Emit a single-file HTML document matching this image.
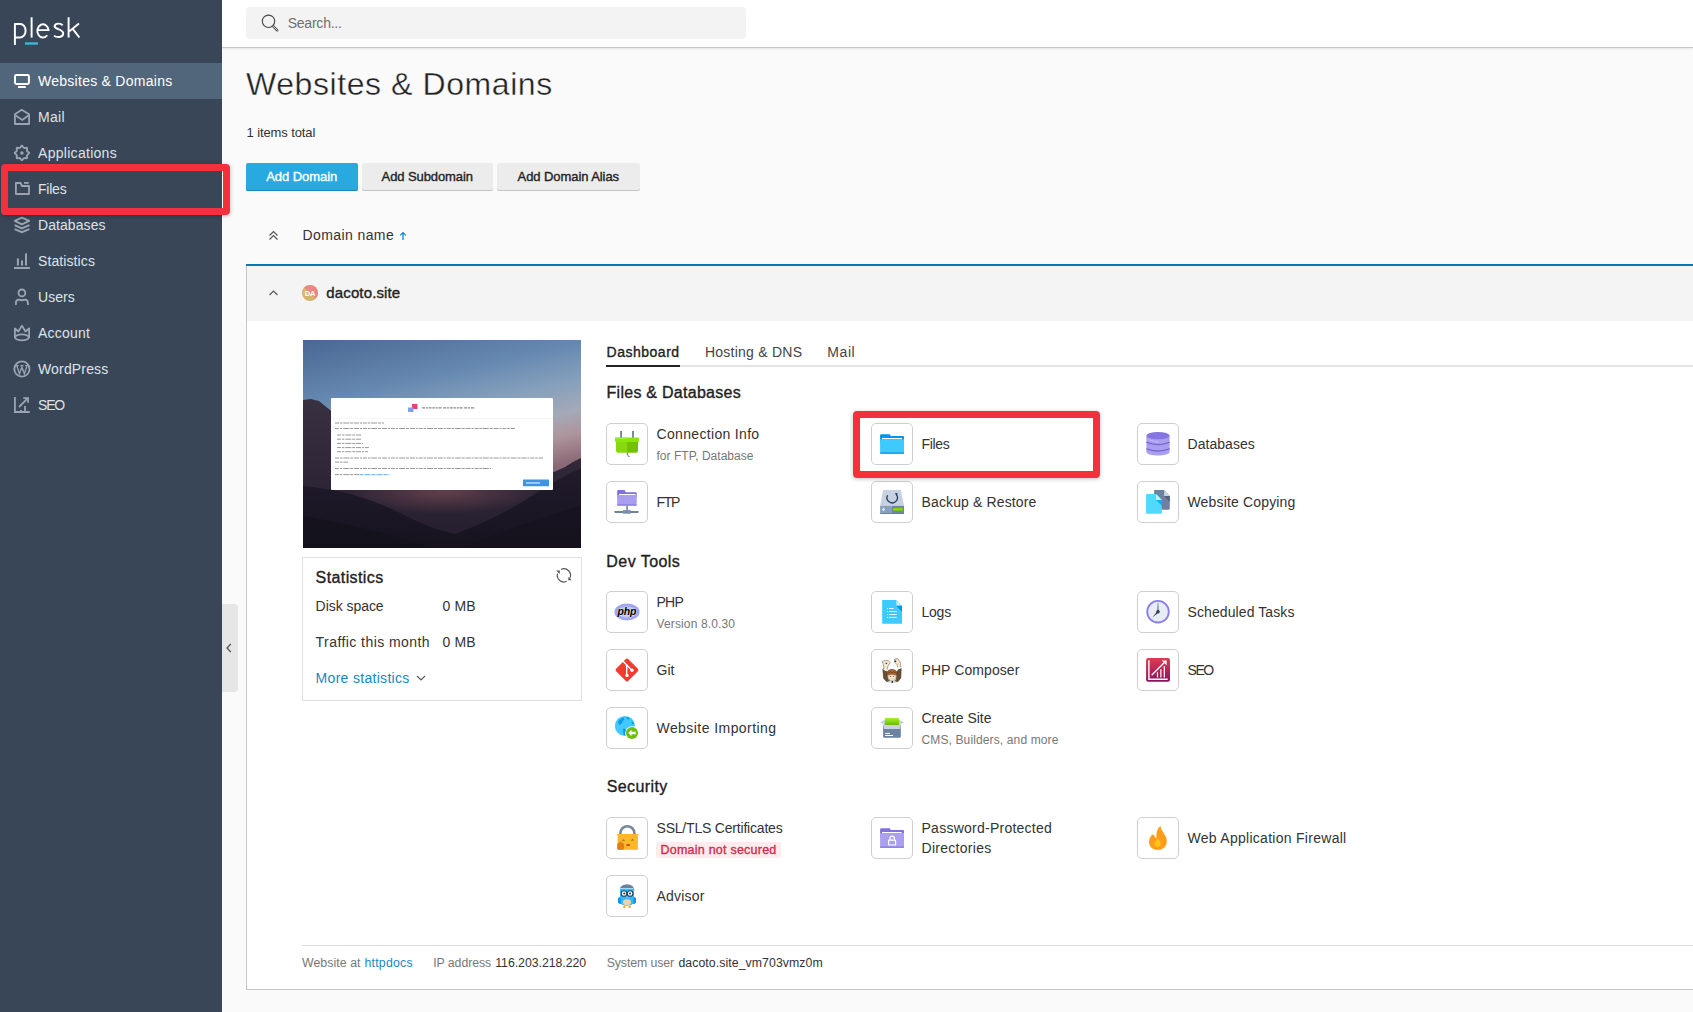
<!DOCTYPE html>
<html><head><meta charset="utf-8"><title>Websites &amp; Domains</title>
<style>
*{box-sizing:border-box}
html,body{margin:0;padding:0}
body{width:1693px;height:1012px;overflow:hidden;position:relative;background:#fafafa;font-family:"Liberation Sans",sans-serif;}
.a{position:absolute}
.t{position:absolute;white-space:nowrap;font-family:"Liberation Sans",sans-serif}
.ib{position:absolute;width:42px;height:42px;border:1px solid #cfcfcf;border-radius:5px;background:#fff}
.ib svg{position:absolute;left:0;top:0}
.rb{position:absolute;border:7px solid #f4303f;border-radius:4px;box-shadow:0 1px 4px rgba(0,0,0,.25)}
</style></head><body>
<div class="a" style="left:0;top:0;width:222px;height:1012px;background:#384657"></div>
<div class="a" style="left:0;top:63px;width:222px;height:36px;background:#51667b"></div>
<svg class="a" style="left:0;top:0" width="100" height="60" viewBox="0 0 100 60">
<g fill="none" stroke="#fff" stroke-width="1.95">
<path d="M14.9 23.2 V44.9"/><path d="M14.9 24 H20.3 A5.3 6.7 0 0 1 20.3 37.4 H14.9"/>
<path d="M31.6 17.3 V37.6"/>
<path d="M37.5 30.1 H48.5 A5.6 6.6 0 1 0 47.2 35.2"/>
<path d="M62.6 25.3 C61.2 23.4 55.4 22.6 54.6 25.9 C53.8 29.6 63.6 28.6 63.2 33.6 C62.8 38 56.2 37.6 54 35.6"/>
<path d="M68.6 17.3 V37.6 M79 23.6 L69.4 31.2 M72.7 28.8 L79.4 37.5"/>
</g>
<rect x="25" y="42.3" width="12.9" height="2.4" fill="#3fb6dc"/>
</svg>
<div class="a" style="left:222px;top:604px;width:16px;height:88px;background:#e6e6e6;border-radius:0 4px 4px 0"></div>
<svg class="a" style="left:222px;top:604px" width="16" height="88"><path d="M8.8 40 L5 44 L8.8 48" fill="none" stroke="#555" stroke-width="1.3"/></svg>
<div class="a" style="left:222px;top:0;width:1471px;height:47px;background:#fff"></div>
<div class="a" style="left:222px;top:47px;width:1471px;height:1px;background:#c9c9c9;box-shadow:0 1px 2px rgba(0,0,0,.12)"></div>
<div class="a" style="left:246px;top:7px;width:500px;height:32px;background:#f3f3f3;border-radius:4px"></div>
<svg class="a" style="left:256px;top:10px" width="30" height="26"><circle cx="12.5" cy="11.3" r="6.2" fill="none" stroke="#4a4a4a" stroke-width="1.15"/><path d="M17 16 L21.2 20.3" stroke="#444" stroke-width="2.4" stroke-linecap="round"/><path d="M17 16 L21.2 20.3" stroke="#f3f3f3" stroke-width="0.9" stroke-linecap="round"/></svg>
<div class="a" style="left:246px;top:163px;width:112px;height:28px;background:#28a9e0;border-radius:2px;box-shadow:inset 0 -1px 0 #1788bd"></div>
<div class="a" style="left:362px;top:163px;width:131px;height:28px;background:#ececec;border-radius:2px;box-shadow:inset 0 -1px 0 #c4c4c4"></div>
<div class="a" style="left:497px;top:163px;width:143px;height:28px;background:#ececec;border-radius:2px;box-shadow:inset 0 -1px 0 #c4c4c4"></div>
<svg class="a" style="left:264px;top:226px" width="20" height="20"><path d="M5.5 9.5 L9.5 5.5 L13.5 9.5 M5.5 13.5 L9.5 9.5 L13.5 13.5" fill="none" stroke="#555" stroke-width="1.2"/></svg>
<svg class="a" style="left:396px;top:228px" width="14" height="14"><path d="M7 4.6 V12 M4.2 7.4 L7 4.6 L9.8 7.4" fill="none" stroke="#1a87c2" stroke-width="1.3"/></svg>
<div class="a" style="left:246px;top:264px;width:1447px;height:726px;background:#fff;border-left:1px solid #c6c6c6;border-bottom:1px solid #c6c6c6"></div>
<div class="a" style="left:246px;top:264px;width:1447px;height:2px;background:#0778b4"></div>
<div class="a" style="left:247px;top:266px;width:1446px;height:55px;background:#f4f4f4"></div>
<svg class="a" style="left:264px;top:283px" width="20" height="20"><path d="M5.5 12 L9.5 8 L13.5 12" fill="none" stroke="#555" stroke-width="1.2"/></svg>
<svg class="a" style="left:302px;top:285px" width="16" height="16" viewBox="0 0 16 16">
<defs><clipPath id="cav"><circle cx="8" cy="8" r="8"/></clipPath></defs>
<g clip-path="url(#cav)"><rect width="16" height="16" fill="#d6b46d"/><path d="M0 0 H16 V16 Z" fill="#e98886"/></g>
<text x="8" y="10.6" font-family="Liberation Sans" font-size="7.4" font-weight="700" fill="#fff" text-anchor="middle">DA</text></svg>
<svg class="a" style="left:303px;top:340px" width="278" height="208" viewBox="0 0 278 208">
<defs>
<linearGradient id="sky" x1="0" y1="0" x2="0.3" y2="1">
<stop offset="0" stop-color="#4a6793"/><stop offset="0.28" stop-color="#6588b0"/><stop offset="0.45" stop-color="#86a0bc"/><stop offset="0.58" stop-color="#a4a9b8"/><stop offset="0.68" stop-color="#ae959c"/><stop offset="0.8" stop-color="#8d6a78"/><stop offset="1" stop-color="#5a4055"/></linearGradient>
<radialGradient id="glow" cx="0.5" cy="0.5" r="0.5"><stop offset="0" stop-color="#7a4a56" stop-opacity="0.7"/><stop offset="1" stop-color="#7a4a56" stop-opacity="0"/></radialGradient>
<linearGradient id="far" x1="0" y1="0" x2="0" y2="1"><stop offset="0" stop-color="#393042"/><stop offset="1" stop-color="#251e2e"/></linearGradient>
<linearGradient id="near" x1="0" y1="0" x2="0" y2="1"><stop offset="0" stop-color="#211b2b"/><stop offset="1" stop-color="#16131f"/></linearGradient>
</defs>
<rect width="278" height="208" fill="url(#sky)"/>
<path d="M0 60 L8 59 L16 61 L27 70 L60 92 L100 116 L140 140 L175 132 L215 118 L240 128 L251 132 L262 127 L270 122 L278 118 V208 H0 Z" fill="url(#far)"/>
<ellipse cx="140" cy="152" rx="95" ry="22" fill="url(#glow)"/>
<path d="M0 146 Q50 150 95 172 Q130 190 152 194 Q195 178 232 154 Q258 137 278 128 V208 H0 Z" fill="url(#near)"/>
<path d="M0 176 Q60 186 130 208 H0Z" fill="#13101b" opacity="0.55"/>
<path d="M278 166 Q220 182 160 208 H278Z" fill="#13101b" opacity="0.5"/>
<rect x="28" y="58" width="222" height="92" rx="1" fill="#fff"/>
<rect x="28" y="78" width="222" height="0.6" fill="#eee"/>
<rect x="109" y="64" width="5.5" height="5" fill="#e8436a"/><rect x="105" y="67.5" width="5.5" height="4.5" fill="#7da0ec"/>
<line x1="119" y1="67.8" x2="172" y2="67.8" stroke="#666" stroke-width="1.3" stroke-dasharray="3 0.8 2 0.8 3 0.8 2.5 0.8 2 0.8 3 1.6" opacity="0.75"/>
<g stroke="#6e6e6e" stroke-width="1.0" stroke-dasharray="4 0.9 2.5 0.9 6 0.9 3 0.9 5 0.9 2 0.9" opacity="0.7"><line x1="32" y1="83" x2="81" y2="83"/><line x1="32" y1="88.5" x2="212" y2="88.5"/><line x1="34" y1="95" x2="59" y2="95"/><line x1="34" y1="99.2" x2="58" y2="99.2"/><line x1="34" y1="103.4" x2="60" y2="103.4"/><line x1="34" y1="107.6" x2="66" y2="107.6"/><line x1="34" y1="111.7" x2="65" y2="111.7"/><line x1="32" y1="118" x2="240" y2="118"/><line x1="32" y1="122.1" x2="45" y2="122.1"/><line x1="32" y1="128.5" x2="188" y2="128.5"/><line x1="32" y1="134.6" x2="56" y2="134.6"/></g>
<line x1="56.5" y1="134.6" x2="86.5" y2="134.6" stroke="#6aa8e6" stroke-width="1.25" stroke-dasharray="4 1 6 1" opacity="0.8"/>
<rect x="220" y="139.5" width="26" height="6.8" rx="0.5" fill="#3f94e2"/>
<rect x="223" y="142.3" width="14" height="1.3" fill="#cfe3f7"/>
</svg>
<div class="a" style="left:302px;top:557px;width:280px;height:144px;border:1px solid #e1e1e1;background:#fff"></div>
<svg class="a" style="left:554px;top:565.5px" width="20" height="20"><g fill="none" stroke="#555" stroke-width="1.15"><path d="M7.11 3.42 A6.6 6.6 0 0 1 15.88 12.19"/><path d="M12.79 15.33 A6.6 6.6 0 0 1 3.52 7.69"/></g><path d="M14.3 10.9 L14.3 14.3 L17.7 14.3Z M2.2 4.6 L5.8 4.6 L5.8 8.1Z" fill="#555"/></svg>
<svg class="a" style="left:414px;top:672px" width="14" height="12"><path d="M3 4 L7 8 L11 4" fill="none" stroke="#555" stroke-width="1.1"/></svg>
<div class="a" style="left:606px;top:365px;width:1087px;height:2px;background:#e3e3e3"></div>
<div class="a" style="left:606px;top:365px;width:74px;height:2px;background:#222"></div>
<div class="a" style="left:302px;top:945px;width:1391px;height:1px;background:#dcdcdc"></div>
<div class="a" style="left:656px;top:842px;width:125px;height:16px;background:#fdebee;border-radius:2px"></div>
<div class="ib" style="left:606px;top:423px"><svg style="left:-1px;top:-1px" width="42" height="42" viewBox="0 0 42 42"><path d="M14.2 8 h1.8 v7 h-1.8z M26.1 8 h1.8 v7 h-1.8z" fill="#6b7f98"/>
<rect x="9" y="14.5" width="24" height="4.4" rx="0.8" fill="#8be60c"/>
<rect x="9" y="14.5" width="12" height="1.4" fill="#9cf236" opacity="0.8"/>
<path d="M10 18.9 H21 V29.8 H12 Q10 29.8 10 27.8Z" fill="#86d80f"/>
<path d="M21 18.9 H32 V27.8 Q32 29.8 30 29.8 H21Z" fill="#72c200"/>
<path d="M21.3 29.8 V31.5 Q21.6 33.4 23.6 33.6" fill="none" stroke="#6b7f98" stroke-width="1.1"/></svg></div>
<div class="ib" style="left:871px;top:423px"><svg style="left:-1px;top:-1px" width="42" height="42" viewBox="0 0 42 42"><path d="M9.1 12.2 Q9.1 11.2 10.1 11.2 H18.6 L19.8 13 H32 Q33 13 33 14 V20 H9.1Z" fill="#0095ea"/>
<rect x="11" y="15" width="20" height="1.3" fill="#fff"/>
<path d="M9.1 16.3 H33 V29.8 Q33 30.7 32 30.7 H10.1 Q9.1 30.7 9.1 29.8Z" fill="#3ec9ff"/>
<rect x="9.1" y="29.4" width="23.9" height="1.3" fill="#0a96ea"/></svg></div>
<div class="ib" style="left:1137px;top:423px"><svg style="left:-1px;top:-1px" width="42" height="42" viewBox="0 0 42 42"><ellipse cx="21" cy="29" rx="11.6" ry="3.6" fill="#a89def"/>
<rect x="9.4" y="12.6" width="23.2" height="16.4" fill="#a89def"/>
<ellipse cx="21" cy="12.6" rx="11.6" ry="3.6" fill="#8476e0"/>
<path d="M9.4 19.3 Q21 24.2 32.6 19.3" fill="none" stroke="#6e60c8" stroke-width="1.1"/>
<path d="M9.4 25.7 Q21 30.6 32.6 25.7" fill="none" stroke="#6e60c8" stroke-width="1.1"/>
<path d="M11 16.5 Q16 18.5 22 18.8" fill="none" stroke="#c3baf7" stroke-width="0.9"/></svg></div>
<div class="ib" style="left:606px;top:481px"><svg style="left:-1px;top:-1px" width="42" height="42" viewBox="0 0 42 42"><path d="M11.2 10.1 Q11.2 9.1 12.2 9.1 H18.6 L19.8 11.2 H29.8 Q30.7 11.2 30.7 12.2 V17 H11.2Z" fill="#8070e0"/>
<rect x="13" y="13" width="16.4" height="1.1" fill="#fff"/>
<path d="M11.2 14.1 H30.7 V23.6 Q30.7 24.6 29.7 24.6 H12.2 Q11.2 24.6 11.2 23.6Z" fill="#aa9ef0"/>
<rect x="11.2" y="23.5" width="19.5" height="1.1" fill="#8070e0"/>
<rect x="20.3" y="24.6" width="1.6" height="5.4" fill="#6e8399"/>
<path d="M8.2 30 H32.8 L32.2 31.9 H8.8Z" fill="#6e8399"/>
<rect x="17" y="29.1" width="7.8" height="3.6" fill="#7b8fa5"/></svg></div>
<div class="ib" style="left:871px;top:481px"><svg style="left:-1px;top:-1px" width="42" height="42" viewBox="0 0 42 42"><path d="M12.1 9.1 H29.8 L33 24.8 H9.1Z" fill="#c6d1e1"/>
<rect x="9.1" y="24.8" width="11.9" height="8" fill="#8aa0b8"/>
<rect x="21" y="24.8" width="12" height="8" fill="#6f86a3"/>
<rect x="9.1" y="32" width="23.9" height="0.8" fill="#60789a"/>
<path d="M12.5 26.6 L14 28.5 L12.5 30.4 L11 28.5Z" fill="#c8f0ff"/>
<rect x="22" y="27" width="9.8" height="2.8" rx="1" fill="#7ed800"/>
<path d="M16.6 14.2 A5.2 5.2 0 1 0 25.4 13.6" fill="none" stroke="#243c5c" stroke-width="1.3"/>
<path d="M23.8 12.2 L26.8 12 L25.6 15Z" fill="#243c5c"/></svg></div>
<div class="ib" style="left:1137px;top:481px"><svg style="left:-1px;top:-1px" width="42" height="42" viewBox="0 0 42 42"><path d="M17.1 9.1 H27.1 L32.8 15 V27.7 Q32.8 28.7 31.8 28.7 H17.1Z" fill="#6f829d"/>
<path d="M27.1 9.1 L32.8 15 H27.1Z" fill="#c8d3e3"/>
<path d="M27.1 15 H32.8 V21Z" fill="#4f6583"/>
<path d="M9.1 13 H19.1 L24.8 18.9 V32.8 H9.1Z" fill="#50d8ff"/>
<path d="M19.1 13 L24.8 18.9 H19.1Z" fill="#c8f0ff"/>
<path d="M19.1 18.9 H24.8 V24.8Z" fill="#00b4f0"/></svg></div>
<div class="ib" style="left:606px;top:591px"><svg style="left:-1px;top:-1px" width="42" height="42" viewBox="0 0 42 42"><ellipse cx="21" cy="21" rx="12.6" ry="8.4" fill="#a0a6f0"/>
<ellipse cx="21" cy="21" rx="9.5" ry="5.6" fill="#fff" opacity="0.35"/>
<text x="20.8" y="23.6" font-family="Liberation Sans" font-size="10.5" font-weight="700" font-style="italic" fill="#000" text-anchor="middle" stroke="#fff" stroke-width="0.5" paint-order="stroke" letter-spacing="-0.2">php</text></svg></div>
<div class="ib" style="left:871px;top:591px"><svg style="left:-1px;top:-1px" width="42" height="42" viewBox="0 0 42 42"><path d="M11.2 9.1 H25.3 L31 14.8 V32.8 H11.2Z" fill="#3ec9ff"/>
<path d="M25.3 9.1 L31 14.8 H25.3Z" fill="#c5ecff"/>
<path d="M25.3 14.8 H31 V20.7Z" fill="#0095ea"/>
<g fill="#fff"><circle cx="16.4" cy="17.5" r="0.55"/><circle cx="16.4" cy="20.5" r="0.55"/><circle cx="16.4" cy="23.5" r="0.55"/><circle cx="16.4" cy="26.4" r="0.55"/>
<rect x="18" y="17" width="4.6" height="0.9"/><rect x="18" y="20" width="7.7" height="0.9"/><rect x="18" y="23" width="7.7" height="0.9"/><rect x="18" y="25.9" width="7.7" height="0.9"/></g></svg></div>
<div class="ib" style="left:1137px;top:591px"><svg style="left:-1px;top:-1px" width="42" height="42" viewBox="0 0 42 42"><defs><linearGradient id="gmh" x1="0" y1="0" x2="0" y2="1"><stop offset="0" stop-color="#2a4060" stop-opacity="0.25"/><stop offset="1" stop-color="#2a4060"/></linearGradient></defs>
<circle cx="21" cy="20.7" r="10.8" fill="#e8edf3" stroke="#8b7ff0" stroke-width="1.9"/>
<path d="M20.3 11.6 H21.7 L21.5 20.7 H20.5Z" fill="url(#gmh)"/>
<path d="M20.3 20.2 L21.7 21.4 L15.3 26.6Z" fill="#2a4060"/>
<circle cx="21" cy="20.7" r="1.8" fill="#2a4060"/></svg></div>
<div class="ib" style="left:606px;top:649px"><svg style="left:-1px;top:-1px" width="42" height="42" viewBox="0 0 42 42"><rect x="12.5" y="12.5" width="17" height="17" rx="1.6" fill="#f03c2e" transform="rotate(45 21 21)"/>
<path d="M17 12.3 L21 16.3 L25.8 21.2 M20.7 16.5 V26.4" fill="none" stroke="#fff" stroke-width="1.4"/>
<circle cx="21" cy="26.4" r="1.7" fill="#fff"/><circle cx="26" cy="21.3" r="1.7" fill="#fff"/><circle cx="20.8" cy="16.6" r="1.2" fill="#fff"/></svg></div>
<div class="ib" style="left:871px;top:649px"><svg style="left:-1px;top:-1px" width="42" height="42" viewBox="0 0 42 42"><path d="M11.8 20 L13.5 19.6 L15.4 22.2 L16.8 30 L19.5 32.8 L15.5 32.6 L12.6 29.2 Z" fill="#6b5033" stroke="#2a1e12" stroke-width="0.5"/>
<path d="M30.2 19.2 L28.4 19.2 L26.2 22.2 L25.4 30.4 L22.8 32.8 L27 32.6 L29.8 29 Z" fill="#6b5033" stroke="#2a1e12" stroke-width="0.5"/>
<ellipse cx="21" cy="24.2" rx="5" ry="3.8" fill="#b5632b" stroke="#2a1e12" stroke-width="0.5"/>
<path d="M17 22.5 L18 24 L19.5 22.6 L21 24 L22.5 22.6 L24 24 L25 22.5" fill="none" stroke="#3a2412" stroke-width="0.5"/>
<path d="M16.6 26.2 Q21 24.6 25.4 26.2 Q25.2 31.3 21 31.6 Q16.8 31.3 16.6 26.2Z" fill="#f7e6cc" stroke="#333" stroke-width="0.35"/>
<path d="M11.2 12.5 L14.5 11.2 L17.5 11.8 L19.3 13.5 L17 17 L15.8 21.5 L13 21 L12.5 16Z" fill="#f7e6cc" stroke="#333" stroke-width="0.4"/>
<path d="M23.5 10 L26.8 9.6 L29.2 13 L30 18.5 L27.5 20 L25.8 15.5 L24 13.5Z" fill="#f7e6cc" stroke="#333" stroke-width="0.4"/>
<path d="M12.6 20.2 L15.8 21.3 M26.2 19.6 L29.8 18.8" stroke="#fff" stroke-width="1.6"/>
<path d="M16.4 32.4 L21 31.6 L25.6 32.4 L25 33.2 H17Z" fill="#d9d9d9"/>
<g fill="#222"><ellipse cx="19.4" cy="27.6" rx="0.9" ry="0.45"/><ellipse cx="22.6" cy="27.6" rx="0.9" ry="0.45"/><rect x="23.4" y="11.6" width="1.8" height="1.3"/><rect x="14.6" y="13.8" width="1.5" height="1"/><circle cx="21.3" cy="33" r="0.9"/><circle cx="21.1" cy="29.7" r="0.4" fill="#b07a5a"/></g></svg></div>
<div class="ib" style="left:1137px;top:649px"><svg style="left:-1px;top:-1px" width="42" height="42" viewBox="0 0 42 42"><defs><linearGradient id="gseo" x1="0" y1="0" x2="0" y2="1"><stop offset="0" stop-color="#e23b51"/><stop offset="1" stop-color="#8a1160"/></linearGradient></defs>
<rect x="9.1" y="8.9" width="23.9" height="23.9" rx="2" fill="url(#gseo)"/>
<g fill="none" stroke="#fff"><path d="M11.9 11.2 V30.2 H30.7" stroke-width="1.4"/>
<path d="M14.6 26.2 L28.6 12.2" stroke-width="1.3"/>
<path d="M20.5 28.5 V23.2 M23.9 28.5 V20.3 M27.3 28.5 V16.9" stroke-width="1.2"/></g>
<path d="M24.8 11.4 H29.6 V16.2Z" fill="#fff"/></svg></div>
<div class="ib" style="left:606px;top:707px"><svg style="left:-1px;top:-1px" width="42" height="42" viewBox="0 0 42 42"><circle cx="18.9" cy="18.9" r="10" fill="#40c8ff"/>
<path d="M12 15 Q14 11 18 10.5 Q19 12.5 17 14 Q15.5 17 13.5 18Z M20 10.5 Q22 10 23.5 11 L22 13Z M25.5 14 Q27.5 15 28 17 L26 17.5Z M17 21.5 Q19.5 21.5 20.5 23.5 L19.5 28.5 Q18 29 17.5 27Z" fill="#0a9ae8"/>
<circle cx="26" cy="26" r="6.8" fill="#fff"/>
<circle cx="26" cy="26" r="6" fill="#6cc00c"/>
<path d="M22.3 26 L25.5 22.8 L25.5 24.8 H29.8 V27.2 H25.5 V29.2Z" fill="#fff"/></svg></div>
<div class="ib" style="left:871px;top:707px"><svg style="left:-1px;top:-1px" width="42" height="42" viewBox="0 0 42 42"><path d="M9.4 15.6 L13 13 H29 L33 15.6 L29 18 H13Z" fill="#c8d2e3"/>
<defs><linearGradient id="glid" x1="0" y1="0" x2="0" y2="1"><stop offset="0" stop-color="#a6f22a"/><stop offset="1" stop-color="#66b30e"/></linearGradient></defs>
<rect x="13.9" y="11" width="14.1" height="7.5" rx="1" fill="url(#glid)"/>
<path d="M12.1 18 H29.8 V29.7 Q29.8 30.7 28.8 30.7 H13.1 Q12.1 30.7 12.1 29.7Z" fill="#6b83a0"/>
<path d="M12.1 18 H29.8 L28.8 21.9 H13.1Z" fill="#c8d2e3"/>
<rect x="14.1" y="25.9" width="4.8" height="1" fill="#fff"/><rect x="14.1" y="28" width="8" height="1" fill="#fff"/></svg></div>
<div class="ib" style="left:606px;top:817px"><svg style="left:-1px;top:-1px" width="42" height="42" viewBox="0 0 42 42"><path d="M14.4 17.5 V16.2 A7 7 0 0 1 28.4 16.2 V17.5" fill="none" stroke="#7a8a99" stroke-width="2.6"/>
<rect x="11.6" y="17.1" width="20.3" height="15.7" fill="#fdb827"/>
<rect x="11" y="17.1" width="21.5" height="1.1" fill="#fdb827"/>
<path d="M16.6 23.4 Q17.5 22.6 18.4 23.4 M25.6 23.2 Q26.5 22.4 27.4 23.2" fill="none" stroke="#333" stroke-width="0.9"/>
<ellipse cx="22.2" cy="28" rx="2" ry="1.1" fill="#d83a2a"/>
<path d="M11.2 27.5 Q11.6 25.5 13.5 25.5 L14.5 24.3 Q15.5 24 15.5 25.5 L16 25.6 Q18 26 18 28 V31.5 Q17.5 32.8 16 32.8 H12.5 Q11.2 32.8 11.2 31.5Z" fill="#e27e12"/></svg></div>
<div class="ib" style="left:871px;top:817px"><svg style="left:-1px;top:-1px" width="42" height="42" viewBox="0 0 42 42"><path d="M9.1 12.2 Q9.1 11.2 10.1 11.2 H18.6 L19.8 13 H32 Q33 13 33 14 V20 H9.1Z" fill="#8070e0"/>
<rect x="11" y="15" width="19.7" height="1.1" fill="#fff"/>
<path d="M9.1 16.1 H33 V29.8 Q33 30.7 32 30.7 H9.1Z" fill="#ab9ff0"/>
<rect x="9.1" y="29.6" width="23.9" height="1.1" fill="#8070e0"/>
<path d="M19 23 V21.3 A2.2 2.2 0 0 1 23.4 21.3 V23" fill="none" stroke="#fff" stroke-width="1.2"/>
<rect x="17.6" y="23.2" width="7" height="4.8" rx="0.6" fill="none" stroke="#fff" stroke-width="1.2"/></svg></div>
<div class="ib" style="left:1137px;top:817px"><svg style="left:-1px;top:-1px" width="42" height="42" viewBox="0 0 42 42"><path d="M23.5 9.1 Q20 12 19.5 16.5 Q19.2 19.5 19.5 21 Q18 21 17.5 19 Q16.5 17.5 15.5 17.6 Q12 20.5 12 25 Q12.3 31 18 32.6 Q21.5 33.4 24.5 32.3 Q29.8 30 29.8 24 Q29.6 19.5 26 15 Q23.8 12.2 23.5 9.1Z" fill="#ff9d1a"/>
<path d="M20.8 21.5 Q17.5 24.5 17.3 27 Q17.5 29.8 20.5 29.8 Q23.6 29.8 23.8 27 Q23.8 24.3 20.8 21.5Z" fill="#ffc61a"/></svg></div>
<div class="ib" style="left:606px;top:875px"><svg style="left:-1px;top:-1px" width="42" height="42" viewBox="0 0 42 42"><path d="M14 13 Q15 10 21 9.2 Q27 10 27.8 13Z" fill="#6d819a"/>
<path d="M27.5 12.5 L28.2 16" stroke="#d9b36a" stroke-width="0.8"/>
<path d="M14 13.5 H28 V27 Q27 30.8 21 30.8 Q15 30.8 14 27Z" fill="#3ab8f8"/>
<path d="M12 23 Q13 22 14.5 22.5 L15 29 Q13 29 12 27.5Z M30 23 Q29 22 27.5 22.5 L27 29 Q29 29 30 27.5Z" fill="#0a96f0"/>
<circle cx="18" cy="18.5" r="2.8" fill="#fff" stroke="#124a66" stroke-width="1.1"/>
<circle cx="24.1" cy="18.5" r="2.8" fill="#fff" stroke="#124a66" stroke-width="1.1"/>
<circle cx="18.2" cy="18.4" r="1" fill="#333"/><circle cx="24" cy="18.4" r="1" fill="#333"/>
<path d="M20.2 21.8 L21.8 21.8 L21 23.6Z" fill="#f2c12e"/>
<ellipse cx="21" cy="27.2" rx="4" ry="3" fill="#ebd3b2"/>
<rect x="17.2" y="31" width="2.3" height="1.8" rx="0.6" fill="#f0a020"/><rect x="22.5" y="31" width="2.3" height="1.8" rx="0.6" fill="#f0a020"/></svg></div>
<svg class="a" style="left:0;top:63px" width="40" height="36" viewBox="0 0 40 36"><rect x="15" y="12" width="13.9" height="8.9" rx="1.3" fill="none" stroke="#fff" stroke-width="2"/><rect x="18" y="23" width="7.8" height="2" rx="0.5" fill="#fff"/></svg>
<svg class="a" style="left:0;top:99px" width="40" height="36" viewBox="0 0 40 36"><path d="M14.9 25 V15.2 L21.7 10.8 L29.1 15.2 V25 Z" fill="none" stroke="#9ba5b1" stroke-width="1.8" stroke-linejoin="round"/><path d="M15.6 16.6 L22.3 21 L28.4 16.6" fill="none" stroke="#9ba5b1" stroke-width="1.8"/></svg>
<svg class="a" style="left:0;top:135px" width="40" height="36" viewBox="0 0 40 36"><path d="M20.96 11.64 Q21.90 9.80 22.84 11.64 Q23.78 13.47 25.74 12.84 Q27.70 12.20 27.06 14.16 Q26.43 16.12 28.26 17.06 Q30.10 18.00 28.26 18.94 Q26.43 19.88 27.06 21.84 Q27.70 23.80 25.74 23.16 Q23.78 22.53 22.84 24.36 Q21.90 26.20 20.96 24.36 Q20.02 22.53 18.06 23.16 Q16.10 23.80 16.74 21.84 Q17.37 19.88 15.54 18.94 Q13.70 18.00 15.54 17.06 Q17.37 16.12 16.74 14.16 Q16.10 12.20 18.06 12.84 Q20.02 13.47 20.96 11.64 Z" fill="none" stroke="#9ba5b1" stroke-width="1.8" stroke-width="1.6"/><circle cx="21.9" cy="18" r="1.7" fill="#9ba5b1"/></svg>
<svg class="a" style="left:0;top:171px" width="40" height="36" viewBox="0 0 40 36"><path d="M15.9 23 V12 H20.6 L22 15 H29 V23 Z" fill="none" stroke="#9ba5b1" stroke-width="1.8" stroke-linejoin="round"/><path d="M24 11.9 H28.7" fill="none" stroke="#9ba5b1" stroke-width="1.8" stroke-width="1.5"/></svg>
<svg class="a" style="left:0;top:207px" width="40" height="36" viewBox="0 0 40 36"><path d="M14.8 13.9 L21.9 10.6 L29.2 13.9 L21.9 17.4 Z" fill="none" stroke="#9ba5b1" stroke-width="1.8" stroke-linejoin="round"/><path d="M14.6 18.1 L21.8 21.4 L29.4 18.1 M14.6 22.1 L21.8 25.2 L29.4 22.1" fill="none" stroke="#9ba5b1" stroke-width="1.8"/></svg>
<svg class="a" style="left:0;top:243px" width="40" height="36" viewBox="0 0 40 36"><g fill="#9ba5b1"><rect x="16.9" y="15.4" width="2" height="7.2"/><rect x="21" y="17.5" width="2" height="5.1"/><rect x="25" y="10.4" width="2" height="12.2"/><rect x="14" y="24" width="15.8" height="2"/></g></svg>
<svg class="a" style="left:0;top:279px" width="40" height="36" viewBox="0 0 40 36"><circle cx="21.9" cy="13.9" r="3.4" fill="none" stroke="#9ba5b1" stroke-width="1.8"/><path d="M15.9 26 V24 Q15.9 20.7 19 20.7 Q21.9 21.8 24.8 20.7 Q27.9 20.7 27.9 24 V26" fill="none" stroke="#9ba5b1" stroke-width="1.8"/></svg>
<svg class="a" style="left:0;top:315px" width="40" height="36" viewBox="0 0 40 36"><path d="M14.9 23 V13.3 L18.3 16.5 L21.9 10.6 L25.5 16.5 L29.1 13.3 V23" fill="none" stroke="#9ba5b1" stroke-width="1.8" stroke-linejoin="round"/><ellipse cx="21.9" cy="22.4" rx="6.8" ry="3" fill="none" stroke="#9ba5b1" stroke-width="1.8"/></svg>
<svg class="a" style="left:0;top:351px" width="40" height="36" viewBox="0 0 40 36"><circle cx="21.9" cy="18" r="7.6" fill="none" stroke="#9ba5b1" stroke-width="1.8" stroke-width="1.5"/><path d="M16.8 14.6 L19.4 22.8 L21.9 16.2 L24.4 22.8 L27.1 14.6 M15.5 14.6 H18.6 M20.4 14.6 H23.5 M25.3 14.6 H28" fill="none" stroke="#9ba5b1" stroke-width="1.3"/></svg>
<svg class="a" style="left:0;top:387px" width="40" height="36" viewBox="0 0 40 36"><path d="M14.9 10 V25 H29.8" fill="none" stroke="#9ba5b1" stroke-width="1.8"/><path d="M19 20 L27.7 11.3 M23.3 11.2 H28 V15.7" fill="none" stroke="#9ba5b1" stroke-width="1.8"/><path d="M21 23 V25 M25 19 V25" fill="none" stroke="#9ba5b1" stroke-width="1.8"/></svg>
<div class="t" id="t0" style="left:38px;top:74.15px;font-size:14px;line-height:14px;font-weight:400;color:#ffffff;letter-spacing:0.267px;">Websites &amp; Domains</div>
<div class="t" id="t1" style="left:38px;top:110.15px;font-size:14px;line-height:14px;font-weight:400;color:#dfe3e8;letter-spacing:0.282px;">Mail</div>
<div class="t" id="t2" style="left:38px;top:146.15px;font-size:14px;line-height:14px;font-weight:400;color:#dfe3e8;letter-spacing:0.292px;">Applications</div>
<div class="t" id="t3" style="left:38px;top:182.15px;font-size:14px;line-height:14px;font-weight:400;color:#dfe3e8;letter-spacing:-0.233px;">Files</div>
<div class="t" id="t4" style="left:38px;top:218.15px;font-size:14px;line-height:14px;font-weight:400;color:#dfe3e8;letter-spacing:0.074px;">Databases</div>
<div class="t" id="t5" style="left:38px;top:254.15px;font-size:14px;line-height:14px;font-weight:400;color:#dfe3e8;letter-spacing:0.098px;">Statistics</div>
<div class="t" id="t6" style="left:38px;top:290.15px;font-size:14px;line-height:14px;font-weight:400;color:#dfe3e8;letter-spacing:0.028px;">Users</div>
<div class="t" id="t7" style="left:38px;top:326.15px;font-size:14px;line-height:14px;font-weight:400;color:#dfe3e8;letter-spacing:0.215px;">Account</div>
<div class="t" id="t8" style="left:38px;top:362.15px;font-size:14px;line-height:14px;font-weight:400;color:#dfe3e8;letter-spacing:0.157px;">WordPress</div>
<div class="t" id="t9" style="left:38px;top:398.15px;font-size:14px;line-height:14px;font-weight:400;color:#dfe3e8;letter-spacing:-1.193px;">SEO</div>
<div class="t" id="t10" style="left:287.7px;top:16.15px;font-size:14px;line-height:14px;font-weight:400;color:#6f6f6f;letter-spacing:-0.226px;">Search...</div>
<div class="t" id="t11" style="left:246px;top:67.71px;font-size:32px;line-height:32px;font-weight:400;color:#222;letter-spacing:0.577px;-webkit-text-stroke:0.4px #fafafa;">Websites &amp; Domains</div>
<div class="t" id="t12" style="left:246.5px;top:126.00px;font-size:13px;line-height:13px;font-weight:400;color:#333;letter-spacing:-0.107px;">1 items total</div>
<div class="t" id="t13" style="left:266.2px;top:170.00px;font-size:13px;line-height:13px;font-weight:400;color:#fff;letter-spacing:-0.055px;-webkit-text-stroke:0.35px #fff;">Add Domain</div>
<div class="t" id="t14" style="left:381.6px;top:170.00px;font-size:13px;line-height:13px;font-weight:400;color:#222;letter-spacing:-0.094px;-webkit-text-stroke:0.35px #222;">Add Subdomain</div>
<div class="t" id="t15" style="left:517.6px;top:170.00px;font-size:13px;line-height:13px;font-weight:400;color:#222;letter-spacing:-0.077px;-webkit-text-stroke:0.35px #222;">Add Domain Alias</div>
<div class="t" id="t16" style="left:302.6px;top:228.35px;font-size:14px;line-height:14px;font-weight:400;color:#333;letter-spacing:0.395px;">Domain name</div>
<div class="t" id="t17" style="left:326.3px;top:285.30px;font-size:15px;line-height:15px;font-weight:400;color:#222;letter-spacing:0.132px;-webkit-text-stroke:0.35px #222;">dacoto.site</div>
<div class="t" id="t18" style="left:315.6px;top:570.46px;font-size:16px;line-height:16px;font-weight:400;color:#222;letter-spacing:0.398px;-webkit-text-stroke:0.35px #222;">Statistics</div>
<div class="t" id="t19" style="left:315.6px;top:599.45px;font-size:14px;line-height:14px;font-weight:400;color:#333;letter-spacing:-0.047px;">Disk space</div>
<div class="t" id="t20" style="left:442.6px;top:599.45px;font-size:14px;line-height:14px;font-weight:400;color:#333;letter-spacing:0.078px;">0 MB</div>
<div class="t" id="t21" style="left:315.6px;top:635.15px;font-size:14px;line-height:14px;font-weight:400;color:#333;letter-spacing:0.439px;">Traffic this month</div>
<div class="t" id="t22" style="left:442.6px;top:635.15px;font-size:14px;line-height:14px;font-weight:400;color:#333;letter-spacing:0.078px;">0 MB</div>
<div class="t" id="t23" style="left:315.6px;top:671.15px;font-size:14px;line-height:14px;font-weight:400;color:#1a87c2;letter-spacing:0.302px;">More statistics</div>
<div class="t" id="t24" style="left:606.6px;top:345.15px;font-size:14px;line-height:14px;font-weight:400;color:#222;letter-spacing:0.500px;-webkit-text-stroke:0.35px #222;">Dashboard</div>
<div class="t" id="t25" style="left:704.9px;top:345.15px;font-size:14px;line-height:14px;font-weight:400;color:#444;letter-spacing:0.250px;">Hosting &amp; DNS</div>
<div class="t" id="t26" style="left:827.3px;top:345.15px;font-size:14px;line-height:14px;font-weight:400;color:#444;letter-spacing:0.582px;">Mail</div>
<div class="t" id="t27" style="left:606.5px;top:385.46px;font-size:16px;line-height:16px;font-weight:400;color:#222;letter-spacing:0.274px;-webkit-text-stroke:0.35px #222;">Files &amp; Databases</div>
<div class="t" id="t28" style="left:606.3px;top:553.96px;font-size:16px;line-height:16px;font-weight:400;color:#222;letter-spacing:0.448px;-webkit-text-stroke:0.35px #222;">Dev Tools</div>
<div class="t" id="t29" style="left:606.7px;top:779.46px;font-size:16px;line-height:16px;font-weight:400;color:#222;letter-spacing:0.400px;-webkit-text-stroke:0.35px #222;">Security</div>
<div class="t" id="t30" style="left:656.5px;top:427.45px;font-size:14px;line-height:14px;font-weight:400;color:#333;letter-spacing:0.328px;">Connection Info</div>
<div class="t" id="t31" style="left:656.5px;top:450.04px;font-size:12px;line-height:12px;font-weight:400;color:#777;letter-spacing:0.029px;">for FTP, Database</div>
<div class="t" id="t32" style="left:921.5px;top:437.15px;font-size:14px;line-height:14px;font-weight:400;color:#333;letter-spacing:-0.312px;">Files</div>
<div class="t" id="t33" style="left:1187.5px;top:437.15px;font-size:14px;line-height:14px;font-weight:400;color:#333;letter-spacing:0.040px;">Databases</div>
<div class="t" id="t34" style="left:656.5px;top:495.15px;font-size:14px;line-height:14px;font-weight:400;color:#333;letter-spacing:-1.351px;">FTP</div>
<div class="t" id="t35" style="left:921.5px;top:495.15px;font-size:14px;line-height:14px;font-weight:400;color:#333;letter-spacing:0.135px;">Backup &amp; Restore</div>
<div class="t" id="t36" style="left:1187.5px;top:495.15px;font-size:14px;line-height:14px;font-weight:400;color:#333;letter-spacing:0.161px;">Website Copying</div>
<div class="t" id="t37" style="left:656.5px;top:595.45px;font-size:14px;line-height:14px;font-weight:400;color:#333;letter-spacing:-0.732px;">PHP</div>
<div class="t" id="t38" style="left:656.5px;top:618.04px;font-size:12px;line-height:12px;font-weight:400;color:#777;letter-spacing:0.133px;">Version 8.0.30</div>
<div class="t" id="t39" style="left:921.5px;top:605.15px;font-size:14px;line-height:14px;font-weight:400;color:#333;letter-spacing:-0.240px;">Logs</div>
<div class="t" id="t40" style="left:1187.5px;top:605.15px;font-size:14px;line-height:14px;font-weight:400;color:#333;letter-spacing:0.094px;">Scheduled Tasks</div>
<div class="t" id="t41" style="left:656.5px;top:663.15px;font-size:14px;line-height:14px;font-weight:400;color:#333;letter-spacing:0.036px;">Git</div>
<div class="t" id="t42" style="left:921.5px;top:663.15px;font-size:14px;line-height:14px;font-weight:400;color:#333;letter-spacing:0.082px;">PHP Composer</div>
<div class="t" id="t43" style="left:1187.5px;top:663.15px;font-size:14px;line-height:14px;font-weight:400;color:#333;letter-spacing:-1.426px;">SEO</div>
<div class="t" id="t44" style="left:656.5px;top:721.15px;font-size:14px;line-height:14px;font-weight:400;color:#333;letter-spacing:0.437px;">Website Importing</div>
<div class="t" id="t45" style="left:921.5px;top:711.45px;font-size:14px;line-height:14px;font-weight:400;color:#333;letter-spacing:-0.004px;">Create Site</div>
<div class="t" id="t46" style="left:921.5px;top:734.04px;font-size:12px;line-height:12px;font-weight:400;color:#777;letter-spacing:0.128px;">CMS, Builders, and more</div>
<div class="t" id="t47" style="left:656.5px;top:821.15px;font-size:14px;line-height:14px;font-weight:400;color:#333;letter-spacing:-0.197px;">SSL/TLS Certificates</div>
<div class="t" id="t48" style="left:660.5px;top:843.82px;font-size:12.5px;line-height:12.5px;font-weight:400;color:#d42a4a;letter-spacing:0.229px;-webkit-text-stroke:0.35px #d42a4a;">Domain not secured</div>
<div class="t" id="t49" style="left:921.5px;top:821.45px;font-size:14px;line-height:14px;font-weight:400;color:#333;letter-spacing:0.252px;">Password-Protected</div>
<div class="t" id="t50" style="left:921.5px;top:841.15px;font-size:14px;line-height:14px;font-weight:400;color:#333;letter-spacing:0.281px;">Directories</div>
<div class="t" id="t51" style="left:1187.5px;top:831.15px;font-size:14px;line-height:14px;font-weight:400;color:#333;letter-spacing:0.281px;">Web Application Firewall</div>
<div class="t" id="t52" style="left:656.5px;top:889.15px;font-size:14px;line-height:14px;font-weight:400;color:#333;letter-spacing:0.188px;">Advisor</div>
<div class="t" id="t53" style="left:302px;top:956.59px;font-size:12.3px;line-height:12.3px;font-weight:400;color:#777;letter-spacing:0.073px;">Website at</div>
<div class="t" id="t54" style="left:364.5px;top:956.59px;font-size:12.3px;line-height:12.3px;font-weight:400;color:#1a87c2;letter-spacing:0.225px;">httpdocs</div>
<div class="t" id="t55" style="left:433.2px;top:956.59px;font-size:12.3px;line-height:12.3px;font-weight:400;color:#777;letter-spacing:-0.056px;">IP address</div>
<div class="t" id="t56" style="left:495.2px;top:956.59px;font-size:12.3px;line-height:12.3px;font-weight:400;color:#333;letter-spacing:-0.027px;">116.203.218.220</div>
<div class="t" id="t57" style="left:606.7px;top:956.59px;font-size:12.3px;line-height:12.3px;font-weight:400;color:#777;letter-spacing:-0.095px;">System user</div>
<div class="t" id="t58" style="left:678.4px;top:956.59px;font-size:12.3px;line-height:12.3px;font-weight:400;color:#333;letter-spacing:0.071px;">dacoto.site_vm703vmz0m</div>
<div class="rb" style="left:1px;top:164px;width:229px;height:51px"></div>
<div class="rb" style="left:852.5px;top:411px;width:247.5px;height:66.5px"></div>
</body></html>
